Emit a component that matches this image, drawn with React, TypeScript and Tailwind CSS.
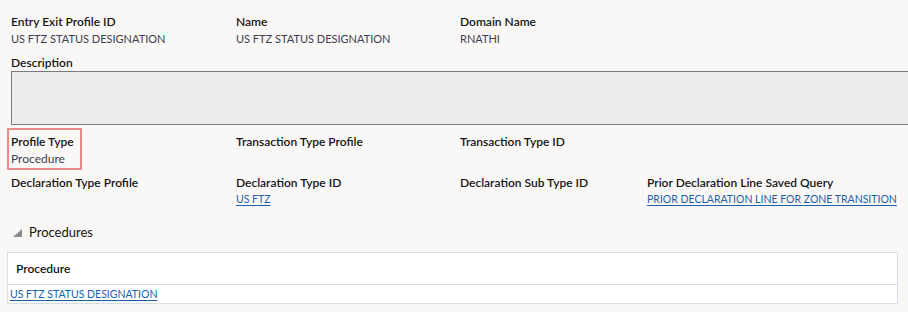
import React from 'react';

const font = { fontFamily: 'Lato, "Open Sans", "Noto Sans", sans-serif' };

const Field = ({ label, value, link, upper }: { label: string; value?: string; link?: boolean; upper?: boolean }) => (
  <div className="flex flex-col">
    <span className="text-[12px] leading-[17px] font-semibold text-[#161513] whitespace-nowrap">{label}</span>
    {value && (
      link ? (
        <a className="self-start text-[10.5px] leading-[17px] text-[#1a5fa8] underline underline-offset-[2px] whitespace-nowrap" href="#">{value}</a>
      ) : (
        <span className={upper ? 'text-[11px] leading-[17px] text-[#3d3d4f] whitespace-nowrap' : 'text-[12px] leading-[17px] text-[#3d3d4f] whitespace-nowrap'}>{value}</span>
      )
    )}
  </div>
);

const App: React.FC = () => {
  return (
    <div className="w-[908px] h-[312px] bg-[#f9f8f7] overflow-hidden" style={font}>
      <div className="grid grid-cols-[225px_224px_187px_1fr] pl-[11px] pt-[13px]">
        <Field label="Entry Exit Profile ID" value="US FTZ STATUS DESIGNATION" upper />
        <Field label="Name" value="US FTZ STATUS DESIGNATION" upper />
        <Field label="Domain Name" value="RNATHI" upper />
      </div>
      <div className="pl-[11px] pt-[7px]">
        <span className="block text-[12px] leading-[17px] font-semibold text-[#161513]">Description</span>
      </div>
      <div className="ml-[11px] h-[54px] bg-[#ebebeb] border border-r-0 border-[#7a7a7a]" />
      <div className="grid grid-cols-[225px_224px_187px_1fr] pl-[11px] pt-[3px]">
        <div className="-ml-[4px]">
          <div className="inline-flex flex-col border-2 border-[#e88a8a] pl-[2px] pr-[6px] pt-[3px] pb-[0px] rounded-[1px]">
            <span className="text-[12px] leading-[17px] font-semibold text-[#161513]">Profile Type</span>
            <span className="text-[12px] leading-[18px] text-[#3d3d4f]">Procedure</span>
          </div>
        </div>
        <div className="pt-[5px]"><Field label="Transaction Type Profile" /></div>
        <div className="pt-[5px]"><Field label="Transaction Type ID" /></div>
        <div />
      </div>
      <div className="grid grid-cols-[225px_224px_187px_1fr] pl-[11px] pt-[4px]">
        <Field label="Declaration Type Profile" />
        <Field label="Declaration Type ID" value="US FTZ" link />
        <Field label="Declaration Sub Type ID" />
        <Field label="Prior Declaration Line Saved Query" value="PRIOR DECLARATION LINE FOR ZONE TRANSITION" link />
      </div>
      <div className="flex items-center gap-[7px] pl-[13px] pt-[15px]">
        <svg width="9" height="8" viewBox="0 0 9 8" className="mt-[2px]">
          <polygon points="9,0 9,8 0,8" fill="#8a8a8a" />
        </svg>
        <span className="text-[13px] leading-[18px] text-[#161513]">Procedures</span>
      </div>
      <div className="ml-[7px] mr-[10px] mt-[11px] bg-white border border-[#d6dde6]">
        <div className="h-[32px] flex items-center pl-[8px] border-b border-[#d6dde6]">
          <span className="text-[12px] font-semibold text-[#161513]">Procedure</span>
        </div>
        <div className="h-[18px] flex items-center pl-[2px]">
          <a href="#" className="text-[10.5px] leading-[16px] text-[#1a5fa8] underline underline-offset-[2px]">US FTZ STATUS DESIGNATION</a>
        </div>
      </div>
    </div>
  );
};

export default App;
